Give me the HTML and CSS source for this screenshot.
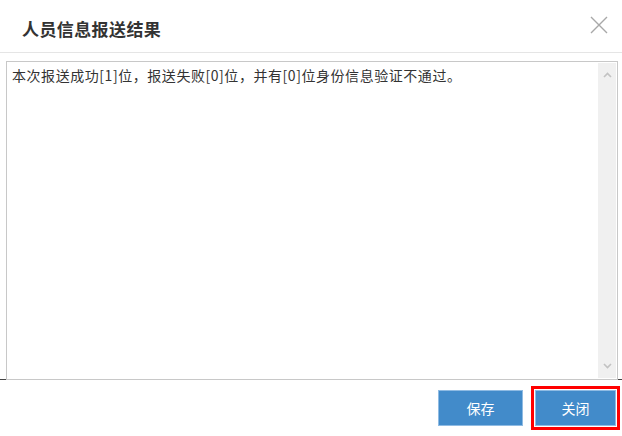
FILE: index.html
```html
<!DOCTYPE html>
<html lang="zh-CN">
<head>
    <meta charset="UTF-8">
    <meta name="viewport" content="width=device-width, initial-scale=1.0">
    <title>人员信息报送结果</title>
    <link rel="stylesheet" href="styles.css">
</head>
<body>
    <div class="dialog">
        <div class="dialog-header">
            <h2 class="dialog-title">人员信息报送结果</h2>
            <button class="close-btn" title="关闭">
                <svg width="18" height="18" viewBox="0 0 18 18">
                    <path d="M1 1 L17 17 M17 1 L1 17" stroke="#a8a8a8" stroke-width="1.4" fill="none"/>
                </svg>
            </button>
        </div>
        <div class="dialog-body">
            <div class="result-box">
                <div class="result-text">本次报送成功[1]位，报送失败[0]位，并有[0]位身份信息验证不通过。</div>
                <div class="scrollbar">
                    <svg width="9" height="6" viewBox="0 0 9 6"><path d="M1 5 L4.5 1.5 L8 5" stroke="#c2c2c2" stroke-width="1.6" fill="none"/></svg>
                    <svg width="9" height="6" viewBox="0 0 9 6"><path d="M1 1 L4.5 4.5 L8 1" stroke="#c2c2c2" stroke-width="1.6" fill="none"/></svg>
                </div>
            </div>
        </div>
        <div class="dialog-footer">
            <button class="btn">保存</button>
            <span class="highlight"><button class="btn btn-close">关闭</button></span>
        </div>
    </div>
</body>
</html>
```

FILE: styles.css
```css
body {
    margin: 0;
    padding: 0;
    background: #fff;
    font-family: "Microsoft YaHei", "Noto Sans CJK SC", "Liberation Sans", sans-serif;
    color: #333;
}
.dialog {
    width: 622px;
    height: 436px;
    background: #fff;
}
.dialog-header {
    height: 52px;
    display: flex;
    align-items: center;
    justify-content: space-between;
    padding: 0 14px 0 22px;
    border-bottom: 1px solid #e5e5e5;
}
.dialog-title {
    margin: 0;
    font-size: 17px;
    font-weight: bold;
    letter-spacing: 0.4px;
    color: #333;
    margin-top: 4px;
}
.close-btn {
    background: none;
    border: none;
    padding: 0;
    width: 18px;
    height: 18px;
    cursor: pointer;
    margin-top: -2px;
}
.dialog-body {
    padding: 8px 4px 0 0;
    border-bottom: 1px solid #444;
}
.result-box {
    height: 315px;
    margin-left: 6px;
    margin-bottom: -1px;
    border: 1px solid #c8c8c8;
    display: flex;
    padding: 1px 1px 1px 0;
    background: #fff;
}
.result-text {
    flex: 1;
    padding: 3px 4px 3px 5px;
    font-size: 14px;
    line-height: 18px;
    letter-spacing: 0.55px;
    color: #333;
}
.scrollbar {
    width: 18px;
    background: #f0f0f0;
    display: flex;
    flex-direction: column;
    justify-content: space-between;
    align-items: center;
    padding: 9px 0;
}
.dialog-footer {
    display: flex;
    justify-content: flex-end;
    align-items: center;
    gap: 8px;
    padding: 6px 2px 0 0;
}
.btn {
    width: 85px;
    height: 36px;
    background: #428bca;
    border: 1px solid #8fbbe3;
    color: #fff;
    font-family: inherit;
    font-size: 14px;
    cursor: pointer;
}
.btn-close {
    width: 81px;
    display: block;
}
.highlight {
    display: block;
    border: 3px solid #f00;
    padding: 1px;
}
```
